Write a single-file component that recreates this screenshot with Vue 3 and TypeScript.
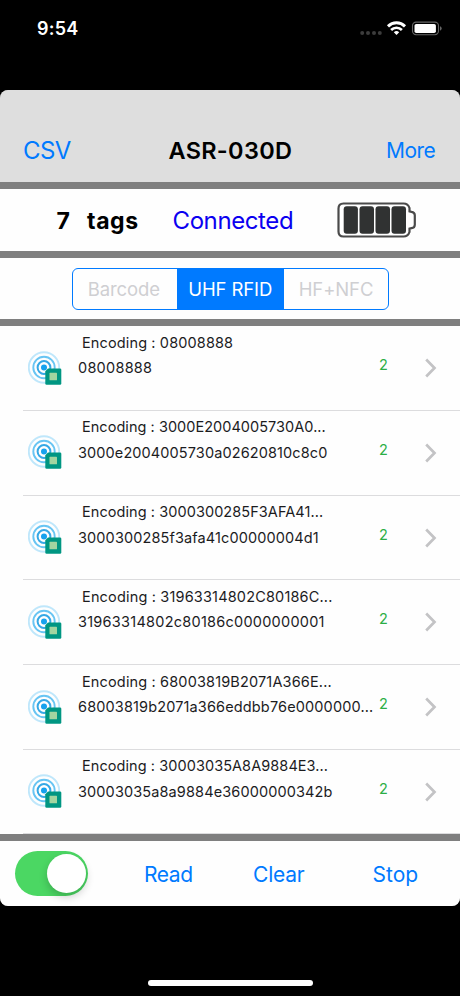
<script setup lang="ts">
interface Tag {
  encoding: string
  id: string
  count: number
  encodingTracking: number
  idTracking: number
}

const tags: Tag[] = [
  { encoding: '08008888', id: '08008888', count: 2, encodingTracking: 0.13, idTracking: 0.25 },
  { encoding: '3000E2004005730A0...', id: '3000e2004005730a02620810c8c0', count: 2, encodingTracking: 0.04, idTracking: 0.11 },
  { encoding: '3000300285F3AFA41...', id: '3000300285f3afa41c00000004d1', count: 2, encodingTracking: 0.07, idTracking: 0.12 },
  { encoding: '31963314802C80186C...', id: '31963314802c80186c0000000001', count: 2, encodingTracking: 0.17, idTracking: 0.25 },
  { encoding: '68003819B2071A366E...', id: '68003819b2071a366eddbb76e0000000...', count: 2, encodingTracking: 0.15, idTracking: 0.14 },
  { encoding: '30003035A8A9884E3...', id: '30003035a8a9884e36000000342b', count: 2, encodingTracking: 0.07, idTracking: 0.12 },
]
</script>

<template>
  <div class="screen">
    <div class="status">
      <span class="time">9:54</span>
      <svg class="signals" width="84" height="18" viewBox="0 0 84 18">
        <g fill="#3c3c3c">
          <circle cx="3.2" cy="13" r="2" /><circle cx="9" cy="13" r="2" />
          <circle cx="15" cy="13" r="2" /><circle cx="20.8" cy="13" r="2" />
        </g>
        <g fill="none" stroke="#fff">
          <path d="M29 6.300a12.200 12.200 0 0 1 17 0" stroke-width="3" />
          <path d="M32.100 10a7.600 7.600 0 0 1 10.800 0" stroke-width="2.600" />
        </g>
        <path d="M37.500 15 34.800 12.200a4 4 0 0 1 5.400 0z" fill="#fff" />
        <rect x="53.500" y="2.100" width="26" height="12.600" rx="3.600" fill="none" stroke="#666" stroke-width="1.100" />
        <rect x="55.500" y="4" width="21.400" height="9" rx="1.800" fill="#fff" />
        <path d="M81 6.300q1.700.6 1.700 2.200t-1.700 2.200z" fill="#666" />
      </svg>
    </div>

    <main class="sheet">
      <header class="header">
        <span class="csv">CSV</span>
        <span class="title">ASR-030D</span>
        <span class="more">More</span>
      </header>

      <section class="summary">
        <span class="num">7</span>
        <span class="tags">tags</span>
        <span class="connected">Connected</span>
        <svg class="battery" width="80" height="36" viewBox="0 0 80 36">
          <path d="M6.500 1.500H66.500q4.500 0 6 4.500v3.300l2 .5q3.300.4 3.300 3.500v9.400q0 3.100-3.300 3.500l-2 .5V30q-1.500 4.500-6 4.500H6.500Q1.500 34.500 1.500 29.500v-23q0-5 5-5z" fill="#fff" stroke="#4a4a4a" stroke-width="2.200" />
          <g fill="#303232">
            <rect x="6.700" y="4.300" width="14.200" height="27.500" rx="3" /><rect x="22.500" y="4.300" width="14.500" height="27.500" rx="3" />
            <rect x="38.500" y="4.300" width="14.500" height="27.500" rx="3" /><rect x="54.500" y="4.300" width="14.500" height="27.500" rx="3" />
          </g>
        </svg>
      </section>

      <section class="modes">
        <div class="segments">
          <span class="segment barcode">Barcode</span>
          <span class="segment active">UHF RFID</span>
          <span class="segment">HF+NFC</span>
        </div>
      </section>

      <section class="list">
        <div v-for="tag in tags" :key="tag.id" class="row">
          <svg class="tag-icon" width="34" height="34" viewBox="0 0 34 34">
            <g fill="none">
              <circle cx="16" cy="16.500" r="15.200" stroke="#bfe7fb" stroke-width="1.900" />
              <circle cx="16" cy="16.500" r="10.700" stroke="#68c5f3" stroke-width="1.900" />
              <circle cx="16" cy="16.500" r="6.400" stroke="#35a8e5" stroke-width="2" />
            </g>
            <circle cx="16" cy="16.500" r="3" fill="#16a2ee" />
            <path d="M20 17.500H32a1.300 1.300 0 0 1 1.300 1.300V32.500a1.300 1.300 0 0 1-1.300 1.300H18.600a1.300 1.300 0 0 1-1.300-1.300V20.200z" fill="#009682" />
            <rect x="21.500" y="21.800" width="7.500" height="7.500" rx=".6" fill="#a2d5a0" />
          </svg>
          <div class="info">
            <span class="encoding" :style="{ letterSpacing: tag.encodingTracking + 'px' }">Encoding : {{ tag.encoding }}</span>
            <span class="id" :style="{ letterSpacing: tag.idTracking + 'px' }">{{ tag.id }}</span>
          </div>
          <span class="count">{{ tag.count }}</span>
          <svg class="chevron" width="12" height="20" viewBox="0 0 12 20">
            <path d="M1.200 1.500 9.500 10 1.200 18.500" fill="none" stroke="#c3c3c5" stroke-width="2.700" />
          </svg>
        </div>
      </section>

      <footer class="footer">
        <span class="switch"><span class="knob"></span></span>
        <span class="action">Read</span>
        <span class="action clear">Clear</span>
        <span class="action stop">Stop</span>
      </footer>
    </main>

    <div class="home"></div>
  </div>
</template>

<style>
body {
  background: #000;
}
</style>

<style scoped>
.screen {
  width: 460px;
  height: 996px;
  overflow: hidden;
  background: #000;
  font-family: Inter, Roboto, sans-serif;
  display: flex;
  flex-direction: column;
}
.screen * {
  box-sizing: border-box;
}
.screen span {
  white-space: nowrap;
}
.screen svg {
  display: block;
  flex: none;
}
.status {
  height: 90px;
  flex: none;
  display: flex;
  justify-content: space-between;
  align-items: flex-start;
  padding: 18.5px 17px 0 37px;
}
.time {
  color: #fff;
  font-size: 18px;
  line-height: 20px;
  font-weight: 600;
  letter-spacing: 0.2px;
}
.signals {
  margin-top: 1.5px;
}
.sheet {
  height: 816px;
  flex: none;
  background: #7f7f7f;
  border-radius: 8px;
  overflow: hidden;
  display: flex;
  flex-direction: column;
  gap: 7px;
}
.header {
  height: 92px;
  flex: none;
  background: #dedede;
  display: grid;
  grid-template-columns: 145.5px 217.5px 97px;
  align-items: center;
  padding: 30px 0 0 23px;
  line-height: 30px;
  color: #007aff;
}
.csv {
  font-size: 24px;
  letter-spacing: -0.6px;
}
.title {
  color: #000;
  font-size: 23.5px;
  font-weight: 600;
  letter-spacing: 0.3px;
}
.more {
  font-size: 21px;
  letter-spacing: -0.5px;
}
.summary {
  height: 62px;
  flex: none;
  background: #fefefe;
  display: grid;
  grid-template-columns: 30.5px 85.5px 164px 80px;
  align-items: center;
  padding-left: 56.5px;
  line-height: 30px;
  font-size: 23px;
}
.summary span {
  padding-top: 2px;
}
.num,
.tags {
  font-weight: 700;
}
.tags {
  letter-spacing: 0.6px;
}
.connected {
  font-size: 24px;
  color: #0b00f0;
  letter-spacing: -0.4px;
}
.modes {
  height: 60.5px;
  flex: none;
  background: #fefefe;
  padding: 10px 71px 0 72px;
}
.segments {
  height: 42px;
  border: 1.5px solid #007aff;
  border-radius: 6px;
  display: grid;
  grid-template-columns: 103.5px 107.5px 1fr;
  overflow: hidden;
}
.segment {
  display: flex;
  align-items: center;
  justify-content: center;
  font-size: 18.5px;
  color: #cfcfd2;
  letter-spacing: -0.1px;
}
.barcode {
  padding-right: 2px;
}
.active {
  background: #007aff;
  color: #fff;
}
.list {
  height: 508.5px;
  flex: none;
  background: #fefefe;
  padding-top: 0.5px;
}
.row {
  height: 84.75px;
  margin-left: 23px;
  border-bottom: 1px solid #dcdcde;
  display: grid;
  grid-template-columns: 55px 301px 46px 12px;
  color: #1c1c1e;
  font-size: 14.5px;
  line-height: 20px;
}
.row:last-child {
  height: 84.25px;
}
.tag-icon {
  margin: 24.5px 0 0 4.5px;
}
.info {
  display: flex;
  flex-direction: column;
  gap: 5.5px;
  padding-top: 6.7px;
}
.encoding {
  padding-left: 4px;
}
.count {
  color: #2cae46;
  padding-top: 29px;
}
.chevron {
  margin-top: 32px;
}
.footer {
  height: 65px;
  flex: none;
  background: #fefefe;
  display: grid;
  grid-template-columns: 129.5px 109px 119.5px 80px;
  align-items: center;
  padding-left: 14.5px;
}
.switch {
  width: 73.5px;
  height: 45px;
  border-radius: 23px;
  background: #4bd763;
  padding: 3px 2.5px;
  display: flex;
  justify-content: flex-end;
}
.knob {
  width: 39px;
  height: 39px;
  border-radius: 50%;
  background: #fff;
  box-shadow: 0 4px 9px rgba(0, 0, 0, 0.2);
}
.action {
  color: #007aff;
  font-size: 21px;
  line-height: 30px;
  padding-top: 2px;
  letter-spacing: -0.4px;
}
.clear {
  letter-spacing: -0.2px;
}
.stop {
  letter-spacing: 0;
}
.home {
  width: 164.5px;
  height: 6.5px;
  border-radius: 4px;
  background: #fff;
  margin: 73.5px 0 0 148px;
}
</style>
